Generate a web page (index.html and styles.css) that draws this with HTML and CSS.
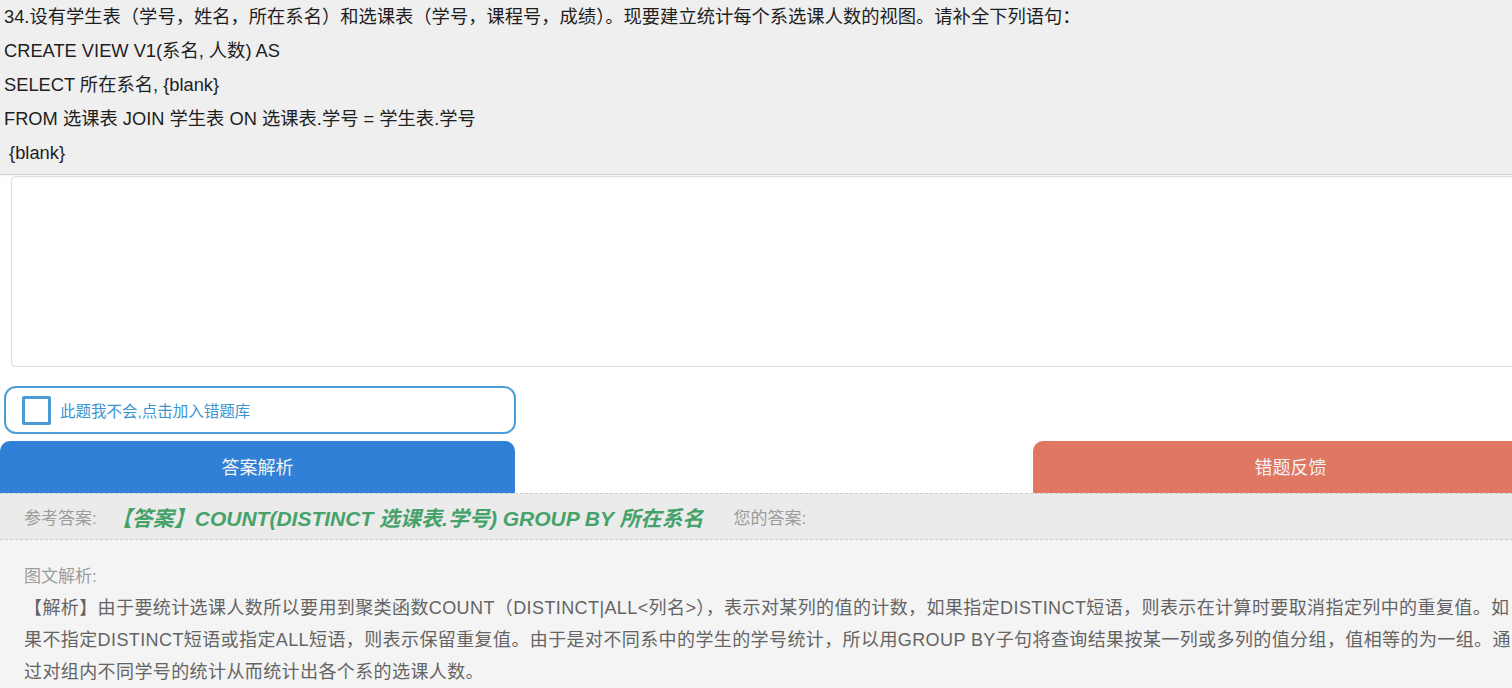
FILE: index.html
```html
<!DOCTYPE html>
<html lang="zh-CN">

<head>
    <meta charset="UTF-8">
    <meta name="viewport" content="width=device-width, initial-scale=1.0">
    <title>练习</title>
    <link rel="stylesheet" href="styles.css">
</head>

<body>
    <div class="page">
        <div class="question">
            <p>34.设有学生表（学号，姓名，所在系名）和选课表（学号，课程号，成绩）。现要建立统计每个系选课人数的视图。请补全下列语句：</p>
            <p>CREATE VIEW V1(系名, 人数) AS</p>
            <p>SELECT 所在系名, {blank}</p>
            <p>FROM 选课表 JOIN 学生表 ON 选课表.学号 = 学生表.学号</p>
            <p>&nbsp;{blank}</p>
        </div>

        <div class="reply">
            <textarea class="reply-input"></textarea>
            <label class="mistake">
                <span class="mistake-box"></span>
                <span class="mistake-text">此题我不会,点击加入错题库</span>
            </label>
        </div>

        <div class="actions">
            <button class="btn btn-blue">答案解析</button>
            <button class="btn btn-red">错题反馈</button>
        </div>

        <div class="ref-row">
            <span class="ref-label">参考答案:</span>
            <span class="ref-answer">【答案】COUNT(DISTINCT 选课表.学号) GROUP BY 所在系名</span>
            <span class="ref-label">您的答案:</span>
        </div>

        <div class="analysis">
            <div class="analysis-title">图文解析:</div>
            <p class="analysis-text">【解析】由于要统计选课人数所以要用到聚类函数COUNT（DISTINCT|ALL&lt;列名&gt;），表示对某列的值的计数，如果指定DISTINCT短语，则表示在计算时要取消指定列中的重复值。如果不指定DISTINCT短语或指定ALL短语，则表示保留重复值。由于是对不同系中的学生的学号统计，所以用GROUP BY子句将查询结果按某一列或多列的值分组，值相等的为一组。通过对组内不同学号的统计从而统计出各个系的选课人数。</p>
        </div>
    </div>
</body>

</html>
```

FILE: styles.css
```css
body {
    margin: 0;
    overflow: hidden;
    background: #ffffff;
    font-family: "Liberation Sans", "Noto Sans CJK SC", sans-serif;
}

.page {
    width: 1548px;
}

.question {
    background: #efefef;
    padding: 0 4px 4px;
    border-bottom: 1px solid #d6d6d6;
    box-shadow: 0 1px 2px rgba(0, 0, 0, 0.06);
    color: #1e1e1e;
    font-size: 18.3px;
}

.question p {
    margin: 0;
    line-height: 34px;
    white-space: nowrap;
}

.reply {
    padding: 1px 0 0;
}

.reply-input {
    display: block;
    box-sizing: border-box;
    margin-left: 11px;
    width: 1526px;
    height: 191px;
    border: 1px solid #dcdcdc;
    border-radius: 4px;
    box-shadow: inset 0 1px 2px rgba(0, 0, 0, 0.04);
    resize: none;
    outline: none;
}

.mistake {
    display: flex;
    align-items: center;
    gap: 9px;
    box-sizing: border-box;
    margin: 19px 0 0 4px;
    width: 512px;
    height: 48px;
    padding: 0 16px;
    border: 2px solid #4d9fd6;
    border-radius: 12px;
    cursor: pointer;
}

.mistake-box {
    width: 29px;
    height: 29px;
    box-sizing: border-box;
    border: 3px solid #4a9ad3;
    border-radius: 2px;
}

.mistake-text {
    color: #3c95cf;
    font-size: 15.5px;
}

.actions {
    display: flex;
    justify-content: space-between;
    margin-top: 7px;
}

.btn {
    width: 515px;
    height: 52px;
    border: none;
    border-radius: 10px 10px 0 0;
    color: #f3f3f3;
    font-family: inherit;
    font-size: 18px;
    padding: 0 0 2px;
    cursor: pointer;
}

.btn-blue {
    background: #2f80d6;
}

.btn-red {
    background: #df7763;
}

.ref-row {
    display: flex;
    align-items: center;
    gap: 14px;
    height: 45px;
    padding: 0 24px;
    background: #ebebeb;
    border-top: 1px dashed #cfcfcf;
    border-bottom: 1px dashed #cfcfcf;
}

.ref-label {
    color: #9c9c9c;
    font-size: 17px;
}

.ref-answer {
    margin-right: 16px;
    color: #46a26a;
    font-size: 21px;
    font-weight: bold;
    font-style: italic;
}

.analysis {
    background: #f4f4f4;
    padding: 24px 24px 10px;
}

.analysis-title {
    color: #9c9c9c;
    font-size: 17px;
    line-height: 26px;
}

.analysis-text {
    margin: 2px 0 0;
    width: 1489px;
    color: #646464;
    font-size: 18px;
    letter-spacing: 0.4px;
    line-height: 32px;
}
```
